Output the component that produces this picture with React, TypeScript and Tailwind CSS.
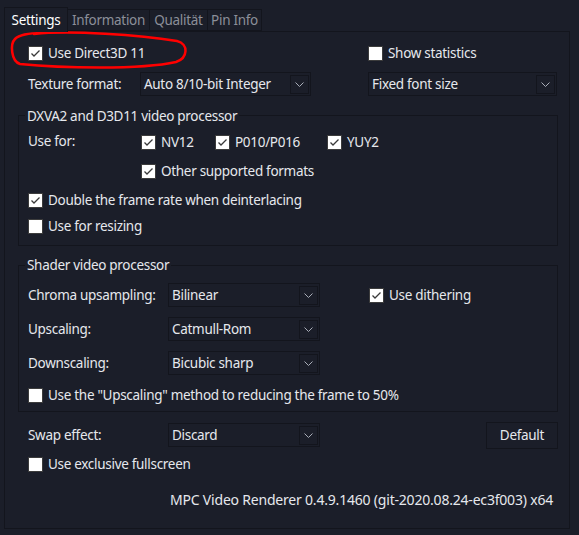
import React from "react";

const Check = ({ checked }: { checked?: boolean }) => (
  <div className="w-[15px] h-[15px] bg-white border border-[#3c3c3c] flex items-center justify-center shrink-0">
    {checked && (
      <svg width="13" height="13" viewBox="0 0 13 13">
        <path d="M2.5 6.5 L5 9 L10.5 3.5" fill="none" stroke="#3a3a3a" strokeWidth="1.3" />
      </svg>
    )}
  </div>
);

const CB = ({ checked, label }: { checked?: boolean; label: string }) => (
  <div className="flex items-center gap-[5px] whitespace-nowrap">
    <Check checked={checked} />
    <span>{label}</span>
  </div>
);

const Select = ({ value, w }: { value: string; w: string }) => (
  <div className={`${w} h-[24px] border border-[#13151d] flex items-center justify-between pl-[3px] pr-[1px] shrink-0`}>
    <span className="whitespace-nowrap">{value}</span>
    <div className="w-[19px] h-[19px] border border-[#13151d] flex items-center justify-center">
      <svg width="9" height="5" viewBox="0 0 9 5">
        <path d="M0.5 0.5 L4.5 4.5 L8.5 0.5" fill="none" stroke="#a9adb8" strokeWidth="1" />
      </svg>
    </div>
  </div>
);

export default function App() {
  return (
    <div
      className="relative w-[579px] h-[535px] bg-[#1b1e29] text-[#e6e8ed] text-[13.5px] leading-[20px] overflow-hidden"
      style={{ fontFamily: '"Noto Sans", "Open Sans", sans-serif', letterSpacing: "-0.3px" }}
    >
      <div className="flex items-end pt-[7px] pl-[4px]">
        <div className="w-[64px] h-[25px] -mb-px border border-b-0 border-[#13151d] bg-[#1b1e29] relative z-10 flex items-center justify-center text-white">
          Settings
        </div>
        <div className="w-[82px] h-[22px] border border-l-0 border-[#13151d] flex items-center justify-center text-[#8c8f99]">
          Information
        </div>
        <div className="w-[58px] h-[22px] border border-l-0 border-[#13151d] flex items-center justify-center text-[#8c8f99]">
          Qualität
        </div>
        <div className="w-[54px] h-[22px] border border-l-0 border-[#13151d] flex items-center justify-center text-[#8c8f99]">
          Pin Info
        </div>
      </div>

      <div className="ml-[4px] w-[566px] h-[498px] border border-[#13151d] flex flex-col">
        <div className="mt-[9px] h-[24px] pl-[23px] flex items-center">
          <div className="w-[340px]">
            <CB checked label="Use Direct3D 11" />
          </div>
          <CB label="Show statistics" />
        </div>

        <div className="mt-[7px] h-[24px] pl-[23px] flex items-center">
          <div className="w-[112px]">Texture format:</div>
          <Select value="Auto 8/10-bit Integer" w="w-[171px]" />
          <div className="ml-[57px]">
            <Select value="Fixed font size" w="w-[189px]" />
          </div>
        </div>

        <div className="mt-[19px] ml-[13px] w-[540px] h-[131px] border border-[#13151d] flex flex-col pl-[9px]">
          <div className="-mt-[10px] -ml-[3px] px-[2px] bg-[#1b1e29] w-fit h-[20px]">DXVA2 and D3D11 video processor</div>
          <div className="mt-[5px] h-[22px] flex items-center">
            <div className="w-[113px] -mt-[2px]">Use for:</div>
            <div className="w-[74px]">
              <CB checked label="NV12" />
            </div>
            <div className="w-[112px]">
              <CB checked label="P010/P016" />
            </div>
            <CB checked label="YUY2" />
          </div>
          <div className="mt-[7px] h-[22px] flex items-center pl-[113px]">
            <CB checked label="Other supported formats" />
          </div>
          <div className="mt-[7px] h-[22px] flex items-center">
            <CB checked label="Double the frame rate when deinterlacing" />
          </div>
          <div className="mt-[4px] h-[22px] flex items-center">
            <CB label="Use for resizing" />
          </div>
        </div>

        <div className="mt-[19px] ml-[13px] w-[540px] h-[147px] border border-[#13151d] flex flex-col pl-[9px]">
          <div className="-mt-[11px] -ml-[3px] px-[2px] bg-[#1b1e29] w-fit h-[20px]">Shader video processor</div>
          <div className="mt-[8px] h-[24px] flex items-center">
            <div className="w-[140px]">Chroma upsampling:</div>
            <Select value="Bilinear" w="w-[152px]" />
            <div className="ml-[49px]">
              <CB checked label="Use dithering" />
            </div>
          </div>
          <div className="mt-[10px] h-[24px] flex items-center">
            <div className="w-[140px]">Upscaling:</div>
            <Select value="Catmull-Rom" w="w-[152px]" />
          </div>
          <div className="mt-[10px] h-[24px] flex items-center">
            <div className="w-[140px]">Downscaling:</div>
            <Select value="Bicubic sharp" w="w-[152px]" />
          </div>
          <div className="mt-[9px] h-[22px] flex items-center">
            <CB label={'Use the "Upscaling" method to reducing the frame to 50%'} />
          </div>
        </div>

        <div className="mt-[11px] h-[24px] pl-[23px] flex items-center">
          <div className="w-[140px]">Swap effect:</div>
          <Select value="Discard" w="w-[152px]" />
          <div className="ml-[166px] w-[72px] h-[27px] border border-[#13151d] flex items-center justify-center">
            Default
          </div>
        </div>
        <div className="mt-[6px] h-[22px] pl-[23px] flex items-center">
          <CB label="Use exclusive fullscreen" />
        </div>
        <div
          className="mt-[15px] h-[20px] pl-[165px] whitespace-nowrap text-[14px]"
          style={{ letterSpacing: "-0.2px" }}
        >
          MPC Video Renderer 0.4.9.1460 (git-2020.08.24-ec3f003) x64
        </div>
      </div>

      <svg className="absolute left-0 top-0 pointer-events-none" width="579" height="535">
        <path
          d="M34 34 C70 30, 140 35, 177 41 C189 44, 188 58, 176 62 C140 70, 60 68, 20 64 C11 61, 10 44, 15 39 C19 35, 27 33, 42 33"
          fill="none"
          stroke="#ff0000"
          strokeWidth="2.5"
          strokeLinecap="round"
        />
      </svg>
    </div>
  );
}
